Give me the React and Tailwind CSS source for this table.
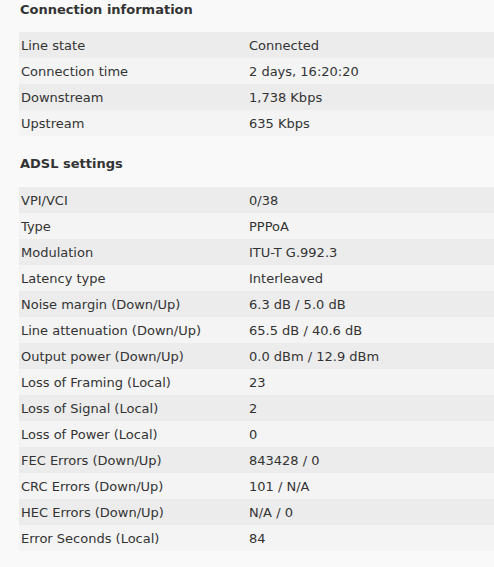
import React from "react";

const connection = [
  ["Line state", "Connected"],
  ["Connection time", "2 days, 16:20:20"],
  ["Downstream", "1,738 Kbps"],
  ["Upstream", "635 Kbps"],
];

const adsl = [
  ["VPI/VCI", "0/38"],
  ["Type", "PPPoA"],
  ["Modulation", "ITU-T G.992.3"],
  ["Latency type", "Interleaved"],
  ["Noise margin (Down/Up)", "6.3 dB / 5.0 dB"],
  ["Line attenuation (Down/Up)", "65.5 dB / 40.6 dB"],
  ["Output power (Down/Up)", "0.0 dBm / 12.9 dBm"],
  ["Loss of Framing (Local)", "23"],
  ["Loss of Signal (Local)", "2"],
  ["Loss of Power (Local)", "0"],
  ["FEC Errors (Down/Up)", "843428 / 0"],
  ["CRC Errors (Down/Up)", "101 / N/A"],
  ["HEC Errors (Down/Up)", "N/A / 0"],
  ["Error Seconds (Local)", "84"],
];

// striped key/value table
function InfoTable({ rows }) {
  return (
    <div className="ml-[19px] flex flex-col">
      {rows.map(([label, value], i) => (
        <div
          key={label}
          className={`flex h-[26px] items-center pt-[2px] ${
            i % 2 === 0 ? "bg-[#ececec]" : "bg-[#f4f4f4]"
          }`}
        >
          <div className="w-[230px] pl-[2px]">{label}</div>
          <div>{value}</div>
        </div>
      ))}
    </div>
  );
}

export default function App() {
  return (
    <div className="min-h-screen bg-[#f9f9f9] text-[13px] text-[#333] font-['DejaVu_Sans',Verdana,sans-serif]">
      <div className="h-[32px] pl-[20px] pt-[1px] font-bold leading-[18px]">
        Connection information
      </div>
      <InfoTable rows={connection} />
      <div className="h-[51px] pl-[20px] pt-[19px] font-bold leading-[18px]">
        ADSL settings
      </div>
      <InfoTable rows={adsl} />
    </div>
  );
}
